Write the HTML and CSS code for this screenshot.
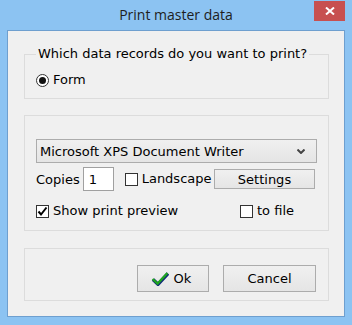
FILE: index.html
```html
<!DOCTYPE html>
<html>
<head>
<meta charset="utf-8">
<link rel="stylesheet" href="styles.css">
</head>
<body>
<div class="window">
  <div class="titlebar">
    <span></span>
    <span class="title">Print master data</span>
    <span class="close">
      <svg width="10" height="8" viewBox="0 0 10 8"><path d="M1 0.5 L9 7.5 M9 0.5 L1 7.5" stroke="#fff" stroke-width="2"/></svg>
    </span>
  </div>
  <div class="client">
    <fieldset class="group g1">
      <legend>Which data records do you want to print?</legend>
      <label class="opt"><span class="radio on"></span>Form</label>
    </fieldset>
    <fieldset class="group g2">
      <div class="select">
        <span>Microsoft XPS Document Writer</span>
        <svg width="8" height="5" viewBox="0 0 8 5"><path d="M0.5 0.5 L4 4 L7.5 0.5" fill="none" stroke="#444" stroke-width="2"/></svg>
      </div>
      <div class="row">
        <span class="lbl">Copies</span>
        <span class="input">1</span>
        <label class="opt land"><span class="check"></span>Landscape</label>
        <span class="btn settings">Settings</span>
      </div>
      <div class="row r3">
        <label class="opt"><span class="check on"><svg width="11" height="11" viewBox="0 0 11 11"><path d="M1.5 5.5 L4 8.5 L9.5 1.5" fill="none" stroke="#000" stroke-width="2"/></svg></span>Show print preview</label>
        <label class="opt tofile"><span class="check"></span>to file</label>
      </div>
    </fieldset>
    <fieldset class="group g3">
      <span class="btn ok"><svg width="18" height="14" viewBox="0 0 18 14"><path d="M2 7.5 L7 12.3 L17 1.5" fill="none" stroke="#102a78" stroke-width="3.4"/><path d="M1.6 7 L6.6 11.6 L16.4 1" fill="none" stroke="#1fa51f" stroke-width="2.2"/></svg>Ok</span>
      <span class="btn cancel">Cancel</span>
    </fieldset>
  </div>
</div>
</body>
</html>
```

FILE: styles.css
```css
* { box-sizing: border-box; }
html, body { margin: 0; padding: 0; }
body {
  width: 352px;
  height: 325px;
  background: #8cc3f2;
  font-family: "DejaVu Sans", Verdana, sans-serif;
  font-size: 13px;
  color: #000;
  overflow: hidden;
}
.window { width: 352px; height: 325px; }
.titlebar {
  height: 30px;
  display: grid;
  grid-template-columns: 1fr auto 1fr;
  align-items: start;
}
.title {
  font-family: "Open Sans", "Noto Sans", sans-serif;
  font-size: 14px;
  color: #1e1e1e;
  line-height: 20px;
  padding-top: 5px;
}
.close {
  justify-self: end;
  margin: 1px 7px 0 0;
  width: 31px;
  height: 20px;
  background: #c75050;
  display: flex;
  align-items: center;
  justify-content: center;
}
.client {
  margin: 0 7px;
  height: 287px;
  border: 1px solid #6e9fcf;
  background: #f0f0f0;
  padding-top: 15px;
}
.group {
  margin: 0 15px 0 16px;
  border: 1px solid #dcdcdc;
  min-width: 0;
}
.g1 { padding: 10px 11px 10px 11px; }
.g1 legend {
  padding: 0 2px;
  margin-left: 0;
  line-height: 16px;
  height: 16px;
}
.opt {
  display: flex;
  align-items: center;
  gap: 4px;
  line-height: 16px;
}
.radio {
  width: 13px;
  height: 13px;
  border: 1px solid #333;
  border-radius: 50%;
  background: #fff;
  display: flex;
  align-items: center;
  justify-content: center;
}
.radio.on::after {
  content: "";
  width: 7px;
  height: 7px;
  border-radius: 50%;
  background: #111;
}
.g2 {
  margin-top: 16px;
  padding: 23px 11px 11px 11px;
}
.select {
  height: 24px;
  border: 1px solid #acacac;
  background: linear-gradient(#f0f0f0, #e5e5e5);
  display: flex;
  align-items: center;
  justify-content: space-between;
  padding: 0 11px 0 3px;
}
.row {
  display: flex;
  align-items: center;
  margin-top: 4px;
  height: 24px;
}
.lbl { margin-right: 3px; }
.input {
  width: 31px;
  height: 24px;
  border: 1px solid #a0a0a0;
  background: #fff;
  padding: 4px 0 0 5px;
  line-height: 16px;
}
.land { margin-left: 11px; }
.check {
  width: 13px;
  height: 13px;
  border: 1px solid #333;
  background: #fff;
  display: flex;
  align-items: center;
  justify-content: center;
}
.btn {
  border: 1px solid #acacac;
  background: linear-gradient(#f0f0f0, #e5e5e5);
  display: flex;
  align-items: center;
  justify-content: center;
}
.settings {
  width: 101px;
  height: 20px;
  margin-left: auto;
  margin-right: 2px;
}
.r3 {
  margin-top: 12px;
  height: 16px;
}
.tofile { margin-left: auto; margin-right: 23px; }
.g3 {
  margin-top: 17px;
  padding: 16px 12px 8px 12px;
  display: flex;
  justify-content: flex-end;
  gap: 14px;
}
.ok {
  width: 72px;
  height: 27px;
  gap: 5px;
  padding-right: 4px;
}
.cancel { width: 93px; height: 27px; }
```
